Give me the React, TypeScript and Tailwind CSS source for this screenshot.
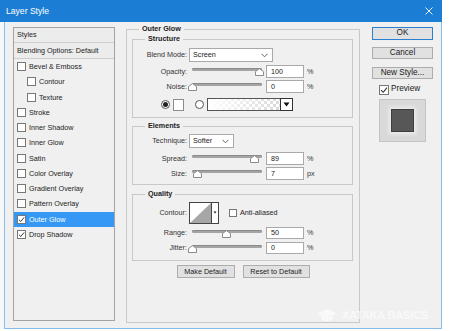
import type { ReactNode } from "react";

type StyleItem = {
  label: string;
  checkbox?: boolean;
  indent?: boolean;
  checked?: boolean;
  active?: boolean;
};

const styleItems: readonly StyleItem[] = [
  { label: "Bevel & Emboss", checkbox: true },
  { label: "Contour", checkbox: true, indent: true },
  { label: "Texture", checkbox: true, indent: true },
  { label: "Stroke", checkbox: true },
  { label: "Inner Shadow", checkbox: true },
  { label: "Inner Glow", checkbox: true },
  { label: "Satin", checkbox: true },
  { label: "Color Overlay", checkbox: true },
  { label: "Gradient Overlay", checkbox: true },
  { label: "Pattern Overlay", checkbox: true },
  { label: "Outer Glow", checkbox: true, checked: true, active: true },
  { label: "Drop Shadow", checkbox: true, checked: true },
];

function Check({ checked, size = 9 }: { checked?: boolean; size?: number }) {
  return (
    <span
      className="flex shrink-0 items-center justify-center border border-[#777] bg-white"
      style={{ width: size, height: size }}
    >
      {checked ? (
        <svg width={size - 2} height={size - 2} viewBox="0 0 8 8">
          <polyline points="1,4.2 3.2,6.3 7,1.6" fill="none" stroke="#333" strokeWidth="1.1" />
        </svg>
      ) : null}
    </span>
  );
}

function Chevron() {
  return (
    <svg width="7" height="5" viewBox="0 0 7 5" className="shrink-0">
      <polyline points="0.5,0.8 3.5,3.8 6.5,0.8" fill="none" stroke="#555" strokeWidth="0.9" />
    </svg>
  );
}

function Legend({ children, ml = "ml-[13px]" }: { children: ReactNode; ml?: string }) {
  return <legend className={`${ml} px-[3px] text-[7.2px] font-bold leading-[10px] text-[#222]`}>{children}</legend>;
}

function Label({ children }: { children: ReactNode }) {
  return <span className="w-[54px] shrink-0 text-right text-[#333]">{children}</span>;
}

function Slider({ at }: { at: number }) {
  return (
    <div className="relative ml-[2px] h-full w-[75px] shrink-0">
      <div className="mt-[3px] ml-[3px] h-[3px] w-[70px] rounded-full bg-[#a4a4a4] shadow-[inset_0_1px_0_#8a8a8a]" />
      <svg width="9" height="8" viewBox="0 0 9 8" className="absolute top-[3px]" style={{ left: at - 4 }}>
        <polygon points="0.5,7.5 0.5,3.6 4.5,0.6 8.5,3.6 8.5,7.5" fill="#fff" stroke="#8a8a8a" />
      </svg>
    </div>
  );
}

function NumberField({ value, unit }: { value: string; unit: string }) {
  return (
    <>
      <div className="ml-[2px] flex h-full w-[38px] shrink-0 items-center border border-[#a9a9a9] bg-white pl-[4px] text-[#222]">
        {value}
      </div>
      <span className="ml-[3px] text-[#333]">{unit}</span>
    </>
  );
}

function SliderRow({ label, at, value, unit, h, mt }: { label: string; at: number; value: string; unit: string; h: string; mt: string }) {
  return (
    <div className={`flex items-center ${h} ${mt}`}>
      <Label>{label}:</Label>
      <Slider at={at} />
      <NumberField value={value} unit={unit} />
    </div>
  );
}

function Radio({ on }: { on?: boolean }) {
  return (
    <span className="flex h-[9px] w-[9px] shrink-0 items-center justify-center rounded-full border border-[#555] bg-white">
      {on ? <span className="h-[5px] w-[5px] rounded-full bg-[#222]" /> : null}
    </span>
  );
}

function GradientPicker() {
  return (
    <svg width="86" height="13" viewBox="0 0 86 13" className="ml-[3px] shrink-0">
      <defs>
        <pattern id="chk" width="6" height="6" patternUnits="userSpaceOnUse">
          <rect width="6" height="6" fill="#fff" />
          <rect width="3" height="3" fill="#d9d9d9" />
          <rect x="3" y="3" width="3" height="3" fill="#d9d9d9" />
        </pattern>
        <linearGradient id="fade" x1="0" x2="1" y1="0" y2="0">
          <stop offset="0" stopColor="#fff" stopOpacity="1" />
          <stop offset="1" stopColor="#fff" stopOpacity="0" />
        </linearGradient>
      </defs>
      <rect x="0.5" y="0.5" width="85" height="12" fill="url(#chk)" stroke="#555" />
      <rect x="1" y="1" width="72" height="11" fill="url(#fade)" />
      <rect x="73.5" y="0.5" width="12" height="12" fill="#fff" stroke="#333" />
      <polygon points="76.5,4.5 82.5,4.5 79.5,8.5" fill="#111" />
    </svg>
  );
}

function ContourPicker() {
  return (
    <svg width="30" height="22" viewBox="0 0 30 22" className="ml-[2px] shrink-0">
      <rect x="0.5" y="0.5" width="29" height="21" fill="#fff" stroke="#444" />
      <polygon points="1,21 22,1 22,21" fill="#a6a6a6" />
      <line x1="22.5" y1="0.5" x2="22.5" y2="21.5" stroke="#444" />
      <polygon points="24.5,9.5 27.5,9.5 26,11.5" fill="#111" />
    </svg>
  );
}

function PushButton({ children, primary, h = "h-[12px]", mt = "" }: { children: ReactNode; primary?: boolean; h?: string; mt?: string }) {
  return (
    <div
      className={[
        "flex w-full items-center justify-center bg-[#e1e1e1] text-[8.2px] text-[#1a1a1a]",
        primary ? "border border-[#2a7fd0]" : "border border-[#adadad]",
        h,
        mt,
      ].join(" ")}
    >
      {children}
    </div>
  );
}

export default function App() {
  return (
    <div className="relative h-[331px] w-[450px] overflow-hidden bg-white font-['Liberation_Sans',Arial,sans-serif] text-[7.2px] leading-none">
      <div className="flex h-[329px] w-[442px] flex-col">
        <div className="flex h-[22px] shrink-0 items-center justify-between bg-[#1b7ed4] pl-[6px] pr-[9px] text-white">
          <span className="text-[8.6px]">Layer Style</span>
          <svg width="8" height="8" viewBox="0 0 8 8">
            <path d="M0.5 0.5 L7.5 7.5 M7.5 0.5 L0.5 7.5" stroke="#fff" strokeWidth="0.9" />
          </svg>
        </div>

        <div className="flex min-h-0 flex-1">
          <div className="w-[4px] shrink-0 bg-[#f6f8fa]" />
          <div className="flex flex-1 border-x border-b border-[#86bdea] bg-[#f0f0f0]">
            {/* styles list */}
            <div className="mt-[5px] ml-[8px] flex h-[294px] w-[102px] shrink-0 flex-col border border-[#a3a3a3] bg-[#f0f0f0] text-[#222]">
              <div className="flex h-[15px] items-center border-b border-[#cfcfcf] bg-[#ececec] pl-[3px]">Styles</div>
              <div className="flex h-[16px] items-center border-b border-[#cfcfcf] bg-[#ececec] pl-[3px]">Blending Options: Default</div>
              {styleItems.map((item) => (
                <div
                  key={item.label}
                  className={[
                    "flex h-[15.25px] shrink-0 items-center gap-[3px]",
                    item.indent ? "pl-[13px]" : "pl-[3px]",
                    item.active ? "bg-[#3598f4] text-white" : "",
                  ].join(" ")}
                >
                  <Check checked={item.checked} />
                  <span>{item.label}</span>
                </div>
              ))}
            </div>

            {/* main settings */}
            <fieldset className="mt-[2px] ml-[11px] flex h-[299px] w-[234px] shrink-0 flex-col border border-[#c8c8c8] px-[5px]">
              <Legend ml="ml-[7px]">Outer Glow</Legend>

              <fieldset className="h-[84px] w-[221px] border border-[#c8c8c8]">
                <Legend ml="ml-[12px]">Structure</Legend>
                <div className="mt-[4px] flex h-[14px] items-center">
                  <Label>Blend Mode:</Label>
                  <div className="ml-[2px] flex h-full w-[84px] items-center justify-between border border-[#a9a9a9] bg-white pr-[4px] pl-[3px] text-[#222]">
                    <span>Screen</span>
                    <Chevron />
                  </div>
                </div>
                <SliderRow label="Opacity" at={70} value="100" unit="%" h="h-[13px]" mt="mt-[3px]" />
                <SliderRow label="Noise" at={3} value="0" unit="%" h="h-[13px]" mt="mt-[2px]" />
                <div className="mt-[5px] flex h-[13px] items-center">
                  <span className="ml-[28px]" />
                  <Radio on />
                  <span className="ml-[3px] h-[12px] w-[11px] shrink-0 border border-[#8c8c8c] bg-white" />
                  <span className="ml-[11px]" />
                  <Radio />
                  <GradientPicker />
                </div>
              </fieldset>

              <fieldset className="mt-[3px] h-[64px] w-[221px] border border-[#c8c8c8]">
                <Legend ml="ml-[12px]">Elements</Legend>
                <div className="mt-[3px] flex h-[14px] items-center">
                  <Label>Technique:</Label>
                  <div className="ml-[2px] flex h-full w-[45px] items-center justify-between border border-[#a9a9a9] bg-white pr-[4px] pl-[3px] text-[#222]">
                    <span>Softer</span>
                    <Chevron />
                  </div>
                </div>
                <SliderRow label="Spread" at={65} value="89" unit="%" h="h-[13px]" mt="mt-[4px]" />
                <SliderRow label="Size" at={8} value="7" unit="px" h="h-[13px]" mt="mt-[2px]" />
              </fieldset>

              <fieldset className="mt-[4px] h-[72px] w-[221px] border border-[#c8c8c8]">
                <Legend ml="ml-[12px]">Quality</Legend>
                <div className="mt-[3px] flex h-[22px] items-center">
                  <Label>Contour:</Label>
                  <ContourPicker />
                  <span className="ml-[10px]" />
                  <Check size={8} />
                  <span className="ml-[3px] text-[#222]">Anti-aliased</span>
                </div>
                <SliderRow label="Range" at={37} value="50" unit="%" h="h-[12px]" mt="mt-[3px]" />
                <SliderRow label="Jitter" at={3} value="0" unit="%" h="h-[12px]" mt="mt-[3px]" />
              </fieldset>

              <div className="mt-[4px] flex h-[13px] justify-center gap-[8px]">
                <div className="flex w-[58px] items-center justify-center border border-[#adadad] bg-[#e1e1e1] text-[#222]">
                  Make Default
                </div>
                <div className="flex w-[67px] items-center justify-center border border-[#adadad] bg-[#e1e1e1] text-[#222]">
                  Reset to Default
                </div>
              </div>
            </fieldset>

            {/* right column */}
            <div className="mt-[5px] ml-[12px] flex w-[61px] shrink-0 flex-col">
              <PushButton primary h="h-[13px]">OK</PushButton>
              <PushButton mt="mt-[7px]">Cancel</PushButton>
              <PushButton mt="mt-[8px]">New Style...</PushButton>
              <div className="mt-[5px] ml-[7px] flex h-[11px] items-center gap-[2px] text-[8.2px] text-[#1a1a1a]">
                <Check checked size={10} />
                <span>Preview</span>
              </div>
              <div className="mt-[4px] ml-[7px] flex h-[43px] w-[47px] items-center justify-center border border-[#c4c4c4] bg-[#d9d9d9]">
                <div className="h-[23px] w-[23px] border border-[#3d3d3d] bg-[#575757] shadow-[0_0_4px_2px_rgba(255,255,255,0.55)]" />
              </div>
            </div>
          </div>
        </div>
      </div>

      {/* watermark */}
      <div className="absolute top-[309px] left-[317px] flex items-center gap-[5px] text-white/60">
        <svg width="20" height="13" viewBox="0 0 20 13" fill="currentColor">
          <polygon points="10,0 20,4.5 10,9 0,4.5" />
          <path d="M4 6.5 V10 C6 12.5 14 12.5 16 10 V6.5 L10 9.5 Z" />
        </svg>
        <span className="text-[11px] font-semibold tracking-[-0.2px]">XATAKA BASICS</span>
      </div>
    </div>
  );
}
